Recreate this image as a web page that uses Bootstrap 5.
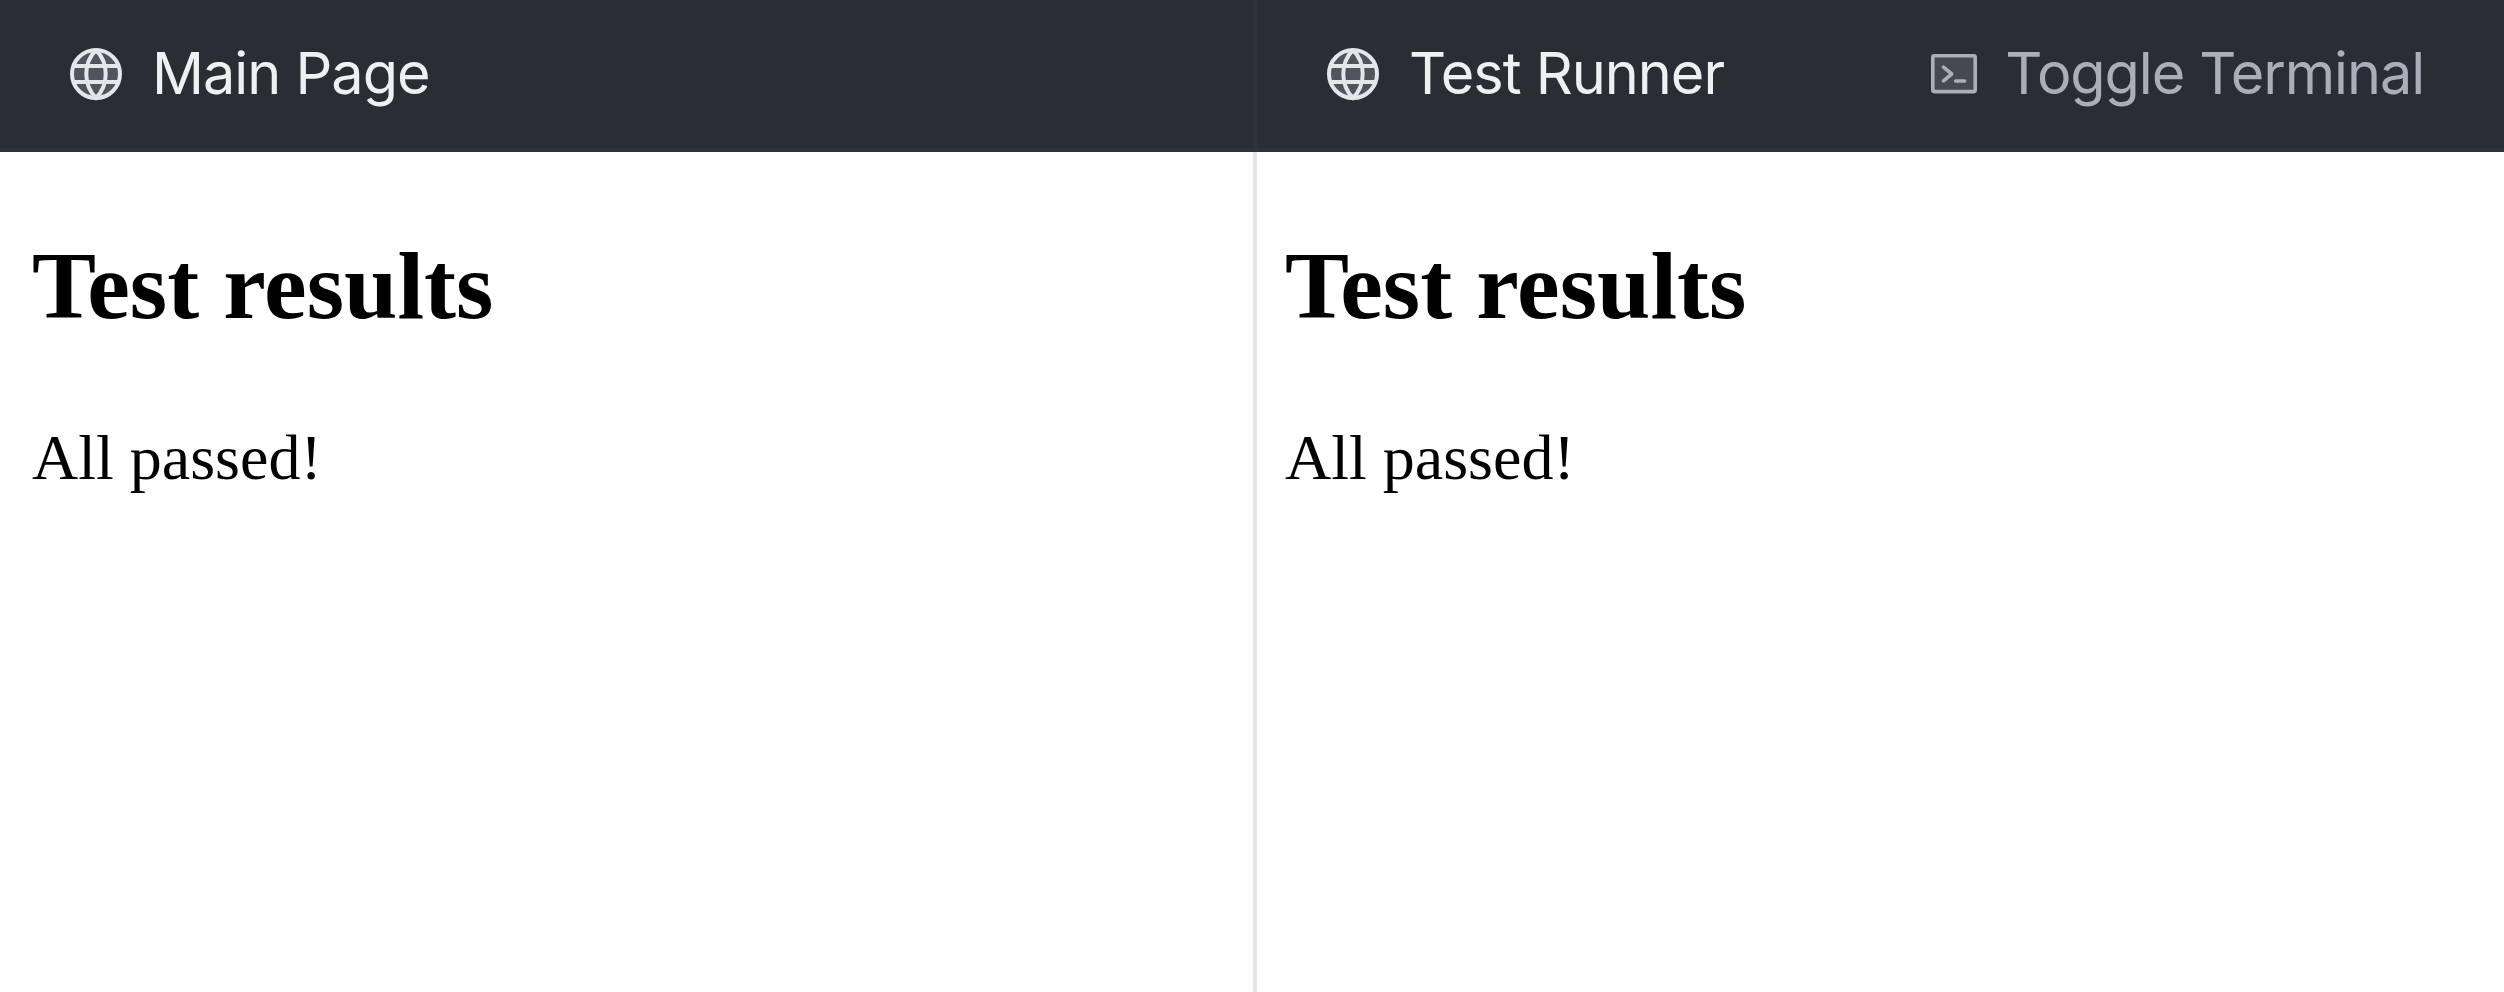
<!DOCTYPE html>
<html lang="en"><head><meta charset="utf-8"><title>Test results</title>
<link href="https://cdn.jsdelivr.net/npm/bootstrap@5.3.0/dist/css/bootstrap.min.css" rel="stylesheet">
<style>
.pane-bar{height:152px;background:#2b2d35;border-bottom:4px solid #30323b;font:57.6px/70px Inter,sans-serif;letter-spacing:-1px;color:#eff0f2;padding:0 80px 0 68px;gap:28px;white-space:nowrap}
.pane-title{padding-bottom:2px}
.left-pane{width:1253px}
.pane-split{border-left:4px solid #e4e5e9}
.pane-split-bar{border-left:4px solid #30323b}
.globe-icon{color:#e5e6ea}
.toggle{color:#abaeb8;letter-spacing:-1.1px}
.result{font-family:"Liberation Serif",serif;color:#000;padding:79px 32px}
.result.pane-split{padding-left:28px}
.result h1{font-size:96px;font-weight:700;line-height:110px;margin:0 0 80px}
.result p{font-size:64px;line-height:74px;margin:0}
.toggle{gap:28px}
</style></head><body class="vh-100 overflow-hidden bg-white">
<svg class="d-none"><symbol id="globe" viewBox="0 0 56 56"><g fill="none" stroke="currentColor" stroke-width="4"><circle cx="28" cy="28" r="24" fill="#50545c"/><path d="M28 4C21.5 10.5 18.3 19 18.3 28S21.5 45.5 28 52C34.5 45.5 37.7 37 37.7 28S34.5 10.5 28 4M5 20H51M5 36H51"/></g></symbol></svg>
<main class="d-flex h-100">
<section class="left-pane flex-shrink-0">
<header class="pane-bar d-flex align-items-center"><svg width="56" height="56" class="globe-icon"><use href="#globe"/></svg><span class="pane-title">Main Page</span></header>
<div class="result"><h1>Test results</h1><p>All passed!</p></div>
</section>
<section class="flex-grow-1 d-flex flex-column">
<header class="pane-bar pane-split-bar d-flex align-items-center"><svg width="56" height="56" class="globe-icon"><use href="#globe"/></svg><span class="pane-title">Test Runner</span>
<span class="toggle ms-auto d-flex align-items-center"><svg width="46" height="40" viewBox="0 0 46 40" fill="none" stroke="currentColor" stroke-width="3.6" stroke-linecap="round" stroke-linejoin="round"><rect x="1.8" y="1.8" width="42.4" height="35.8" rx="1.5" fill="#464951"/><path d="M12.5 13.2L20.7 20L12.5 26.8M24.6 27H33.6"/></svg><span class="pane-title">Toggle Terminal</span></span></header>
<div class="result pane-split flex-grow-1"><h1>Test results</h1><p>All passed!</p></div>
</section>
</main><script src="https://cdn.jsdelivr.net/npm/bootstrap@5.3.0/dist/js/bootstrap.bundle.min.js"></script></body></html>
